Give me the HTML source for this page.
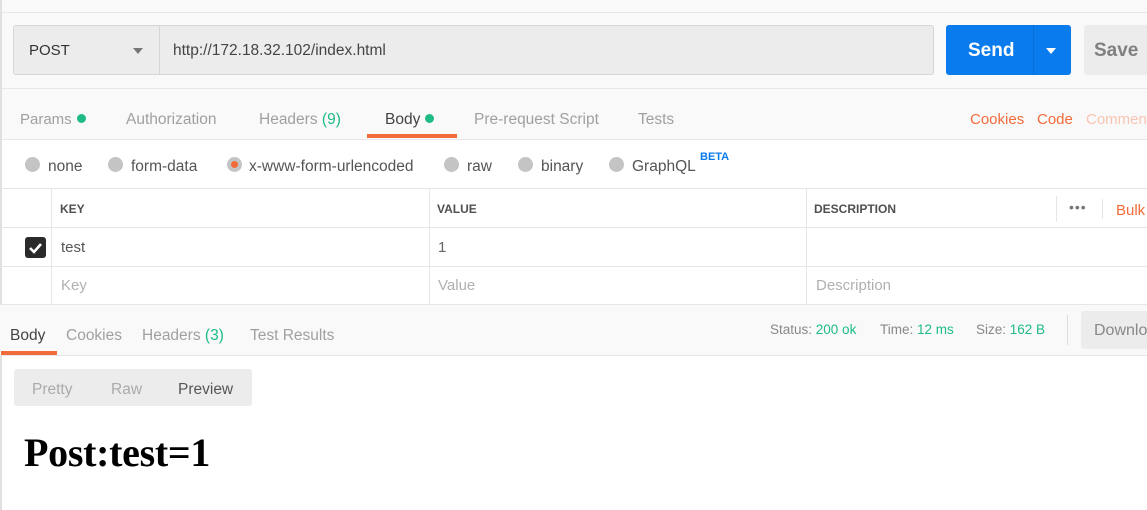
<!DOCTYPE html>
<html><head><style>
*{margin:0;padding:0;box-sizing:border-box}
body{width:1147px;height:510px;overflow:hidden;background:#fff;font-family:"Liberation Sans",sans-serif;position:relative;font-size:15px}
.a{position:absolute;white-space:nowrap}
.g{color:#a0a0a0}
.gr{color:#1ebc84}
.o{color:#f26b3a}
.dot{display:inline-block;width:9px;height:9px;border-radius:50%;background:#1ebc84;margin-left:5px;vertical-align:1px}
.rad{position:absolute;width:15px;height:15px;border-radius:50%;background:#c4c4c4;top:157px}
.hl{position:absolute;height:1px;background:#e6e6e6}
.vl{position:absolute;width:1px;background:#e6e6e6}
</style></head><body>
<div class="a" style="left:0;top:0;width:1147px;height:140px;background:#f9f9f9"></div>
<div class="hl" style="left:0;top:12px;width:1147px;background:#e8e8e8"></div>
<div class="hl" style="left:0;top:88px;width:1147px;background:#e8e8e8"></div>
<div class="hl" style="left:0;top:139px;width:1147px;background:#e8e8e8"></div>
<div class="a" style="left:0;top:0;width:2px;height:510px;background:#e0e0e0"></div>
<div class="a" style="left:13px;top:25px;width:921px;height:50px;background:#ececec;border:1px solid #d6d6d6;border-radius:3px"></div>
<div class="vl" style="left:159px;top:26px;height:48px;background:#d6d6d6"></div>
<div class="a" style="left:29px;top:42px;font-size:15px;color:#333">POST</div>
<div class="a" style="left:133px;top:48px;width:0;height:0;border-left:5px solid transparent;border-right:5px solid transparent;border-top:6px solid #777"></div>
<div class="a" style="left:173px;top:42px;font-size:15.5px;color:#444">http://172.18.32.102/index.html</div>
<div class="a" style="left:946px;top:25px;width:125px;height:50px;background:#097bed;border-radius:3px"></div>
<div class="vl" style="left:1033px;top:25px;height:50px;background:#0a6fd6"></div>
<div class="a" style="left:968px;top:40px;font-size:19px;font-weight:bold;color:#fff">Send</div>
<div class="a" style="left:1046px;top:48px;width:0;height:0;border-left:5px solid transparent;border-right:5px solid transparent;border-top:6px solid #fff"></div>
<div class="a" style="left:1084px;top:25px;width:70px;height:50px;background:#ececec;border-radius:3px"></div>
<div class="a" style="left:1094px;top:40px;font-size:19px;font-weight:bold;color:#808080">Save</div>
<div class="a g" style="left:20px;top:111px">Params<span class="dot"></span></div>
<div class="a g" style="left:126px;top:111px;font-size:15.5px">Authorization</div>
<div class="a g" style="left:259px;top:111px;font-size:15.5px">Headers <span class="gr">(9)</span></div>
<div class="a" style="left:385px;top:111px;color:#444;font-size:15.5px">Body<span class="dot"></span></div>
<div class="a" style="left:367px;top:134px;width:90px;height:4px;background:#f26b3a"></div>
<div class="a g" style="left:474px;top:111px;font-size:15.5px">Pre-request Script</div>
<div class="a g" style="left:638px;top:111px;font-size:15.5px">Tests</div>
<div class="a o" style="left:970px;top:111px">Cookies</div>
<div class="a o" style="left:1037px;top:111px">Code</div>
<div class="a" style="left:1086px;top:111px;color:#f9c5b2">Comments</div>
<div class="rad" style="left:25px"></div><div class="a" style="left:48px;top:158px;color:#555;font-size:15.5px">none</div>
<div class="rad" style="left:108px"></div><div class="a" style="left:131px;top:158px;color:#555;font-size:15.5px">form-data</div>
<div class="rad" style="left:227px"><div style="position:absolute;left:4px;top:4px;width:7px;height:7px;border-radius:50%;background:#f26b3a"></div></div><div class="a" style="left:249px;top:158px;color:#555;font-size:15.5px">x-www-form-urlencoded</div>
<div class="rad" style="left:444px"></div><div class="a" style="left:467px;top:158px;color:#555;font-size:15.5px">raw</div>
<div class="rad" style="left:518px"></div><div class="a" style="left:541px;top:158px;color:#555;font-size:15.5px">binary</div>
<div class="rad" style="left:609px"></div><div class="a" style="left:632px;top:158px;color:#555;font-size:15.5px">GraphQL</div>
<div class="a" style="left:700px;top:151px;font-size:11px;font-weight:bold;color:#097bed">BETA</div>
<div class="hl" style="left:0;top:188px;width:1147px"></div>
<div class="hl" style="left:0;top:227px;width:1147px"></div>
<div class="hl" style="left:0;top:266px;width:1147px"></div>
<div class="hl" style="left:0;top:304px;width:1147px"></div>
<div class="vl" style="left:51px;top:188px;height:116px"></div>
<div class="vl" style="left:429px;top:188px;height:116px"></div>
<div class="vl" style="left:806px;top:188px;height:116px"></div>
<div class="vl" style="left:1056px;top:196px;height:26px"></div>
<div class="vl" style="left:1102px;top:199px;height:20px"></div>
<div class="a" style="left:60px;top:202px;font-size:12px;font-weight:bold;color:#505050">KEY</div>
<div class="a" style="left:437px;top:202px;font-size:12px;font-weight:bold;color:#505050">VALUE</div>
<div class="a" style="left:814px;top:202px;font-size:12px;font-weight:bold;color:#505050">DESCRIPTION</div>
<div class="a" style="left:1069px;top:199px;font-size:14px;color:#777;letter-spacing:1px">•••</div>
<div class="a o" style="left:1116px;top:202px">Bulk</div>
<div class="a" style="left:25px;top:237px;width:21px;height:21px;background:#2a2a2a;border-radius:3px"><svg width="21" height="21"><path d="M5 11 L9 15 L16 7" stroke="#fff" stroke-width="2.6" fill="none"/></svg></div>
<div class="a" style="left:61px;top:239px;color:#555">test</div>
<div class="a" style="left:438px;top:239px;color:#666">1</div>
<div class="a" style="left:61px;top:277px;color:#b0b0b0">Key</div>
<div class="a" style="left:438px;top:277px;color:#b0b0b0">Value</div>
<div class="a" style="left:816px;top:277px;color:#b0b0b0">Description</div>
<div class="a" style="left:0;top:305px;width:1147px;height:50px;background:#f9f9f9"></div>
<div class="hl" style="left:0;top:355px;width:1147px"></div>
<div class="a" style="left:10px;top:327px;color:#444;font-size:15.5px">Body</div>
<div class="a" style="left:1px;top:351px;width:56px;height:4px;background:#f26b3a"></div>
<div class="a g" style="left:66px;top:327px;font-size:15.5px">Cookies</div>
<div class="a g" style="left:142px;top:327px;font-size:15.5px">Headers <span class="gr">(3)</span></div>
<div class="a g" style="left:250px;top:327px;font-size:15.5px">Test Results</div>
<div class="a" style="left:770px;top:322px;font-size:13.5px;color:#888">Status: <span class="gr">200 ok</span></div>
<div class="a" style="left:880px;top:322px;font-size:13.5px;color:#888">Time: <span class="gr">12 ms</span></div>
<div class="a" style="left:976px;top:322px;font-size:13.5px;color:#888">Size: <span class="gr">162 B</span></div>
<div class="vl" style="left:1067px;top:315px;height:30px;background:#ddd"></div>
<div class="a" style="left:1081px;top:311px;width:80px;height:38px;background:#ececec;border-radius:3px"></div>
<div class="a" style="left:1094px;top:322px;color:#888;font-size:16px">Download</div>
<div class="a" style="left:14px;top:369px;width:238px;height:37px;background:#ececec;border-radius:3px"></div>
<div class="a" style="left:32px;top:381px;color:#aaa;font-size:15.5px">Pretty</div>
<div class="a" style="left:111px;top:381px;color:#aaa;font-size:15.5px">Raw</div>
<div class="a" style="left:178px;top:381px;color:#555;font-size:15.5px">Preview</div>
<div class="a" style="left:24px;top:429px;font-family:'Liberation Serif',serif;font-weight:bold;font-size:40px;color:#000;letter-spacing:-0.3px">Post:test=1</div>
</body></html>
